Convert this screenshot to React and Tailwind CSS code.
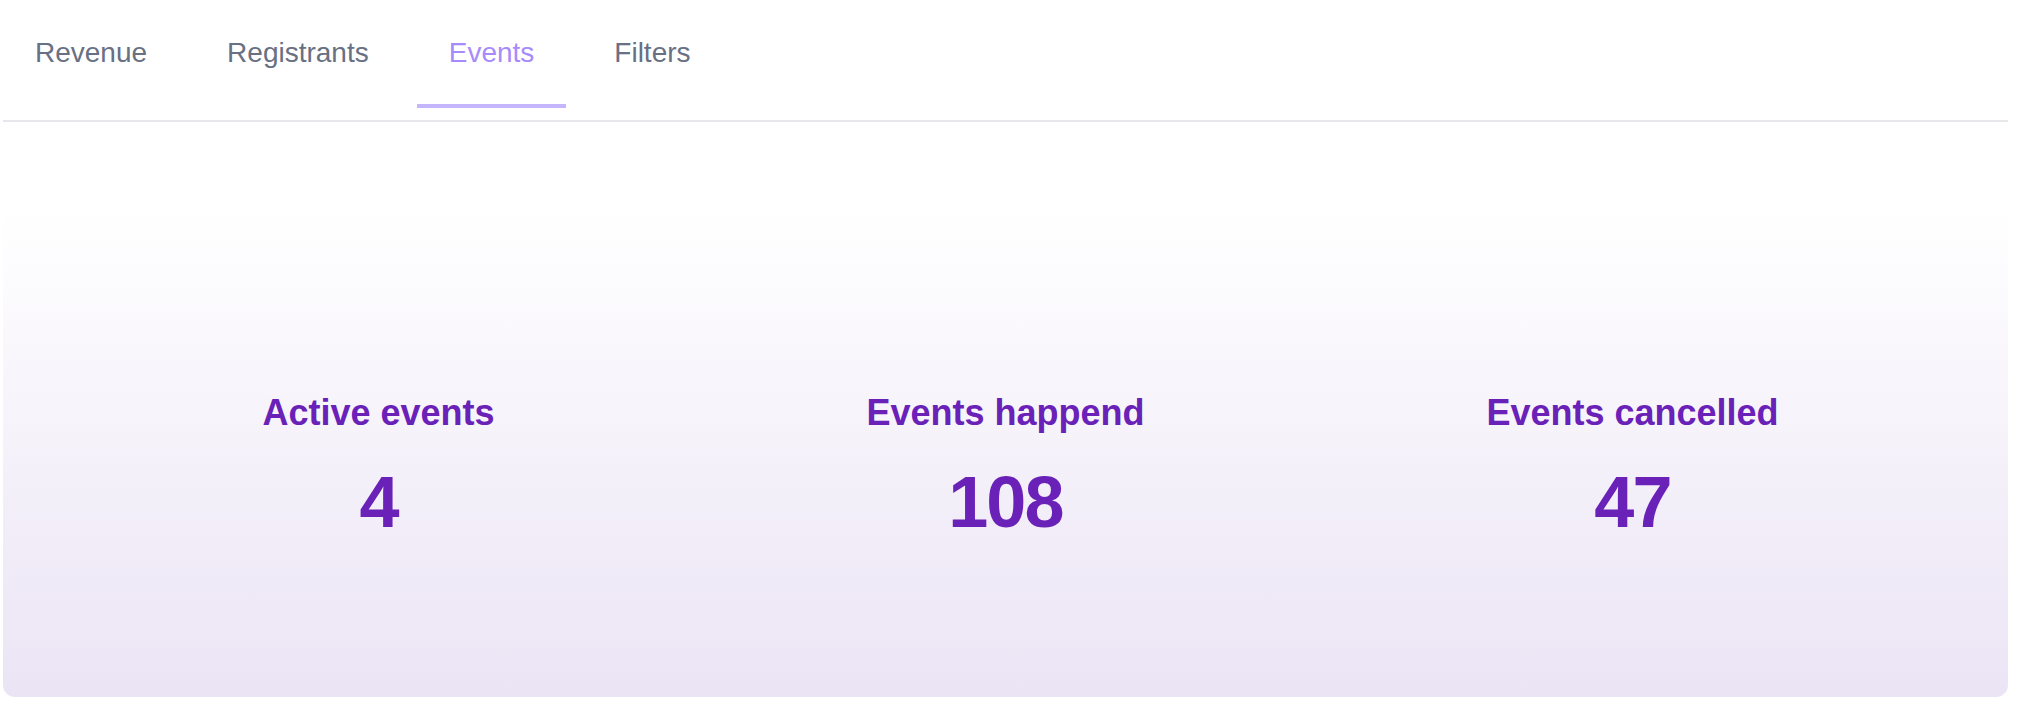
import React, { useState } from 'react';

const tabs = ['Revenue', 'Registrants', 'Events', 'Filters'];

const stats = [
  { label: 'Active events', value: 4 },
  { label: 'Events happend', value: 108 },
  { label: 'Events cancelled', value: 47 },
];

const App = () => {
  const [active, setActive] = useState('Events');

  return (
    <div className="bg-white font-['Liberation_Sans',Arial,sans-serif]">
      <div className="ml-[3px] w-[2005px]">
        {/* Tab bar */}
        <div className="flex gap-4 border-b-2 border-[#e6e6eb] pb-3">
          {tabs.map((tab) => (
            <button
              key={tab}
              onClick={() => setActive(tab)}
              className={
                active === tab
                  ? 'border-b-4 border-[#c4b5fd] px-8 pt-[37px] pb-[35px] text-[28px] leading-[32px] text-[#a78bfa]'
                  : 'border-b-4 border-transparent px-8 pt-[37px] pb-[35px] text-[28px] leading-[32px] text-[#687083]'
              }
            >
              {tab}
            </button>
          ))}
        </div>

        {/* Stats panel */}
        <div className="h-[575px] rounded-b-xl bg-linear-to-b from-white from-15% to-[#ebe4f5] px-[62px] pt-[271px]">
          <div className="grid grid-cols-3">
            {stats.map((s) => (
              <div key={s.label} className="flex flex-col items-center">
                <span className="text-4xl font-bold text-[#6a21b8]">{s.label}</span>
                <span className="mt-[33px] text-7xl font-bold tracking-tight text-[#6a21b8]">
                  {s.value}
                </span>
              </div>
            ))}
          </div>
        </div>
      </div>
    </div>
  );
};

export default App;
